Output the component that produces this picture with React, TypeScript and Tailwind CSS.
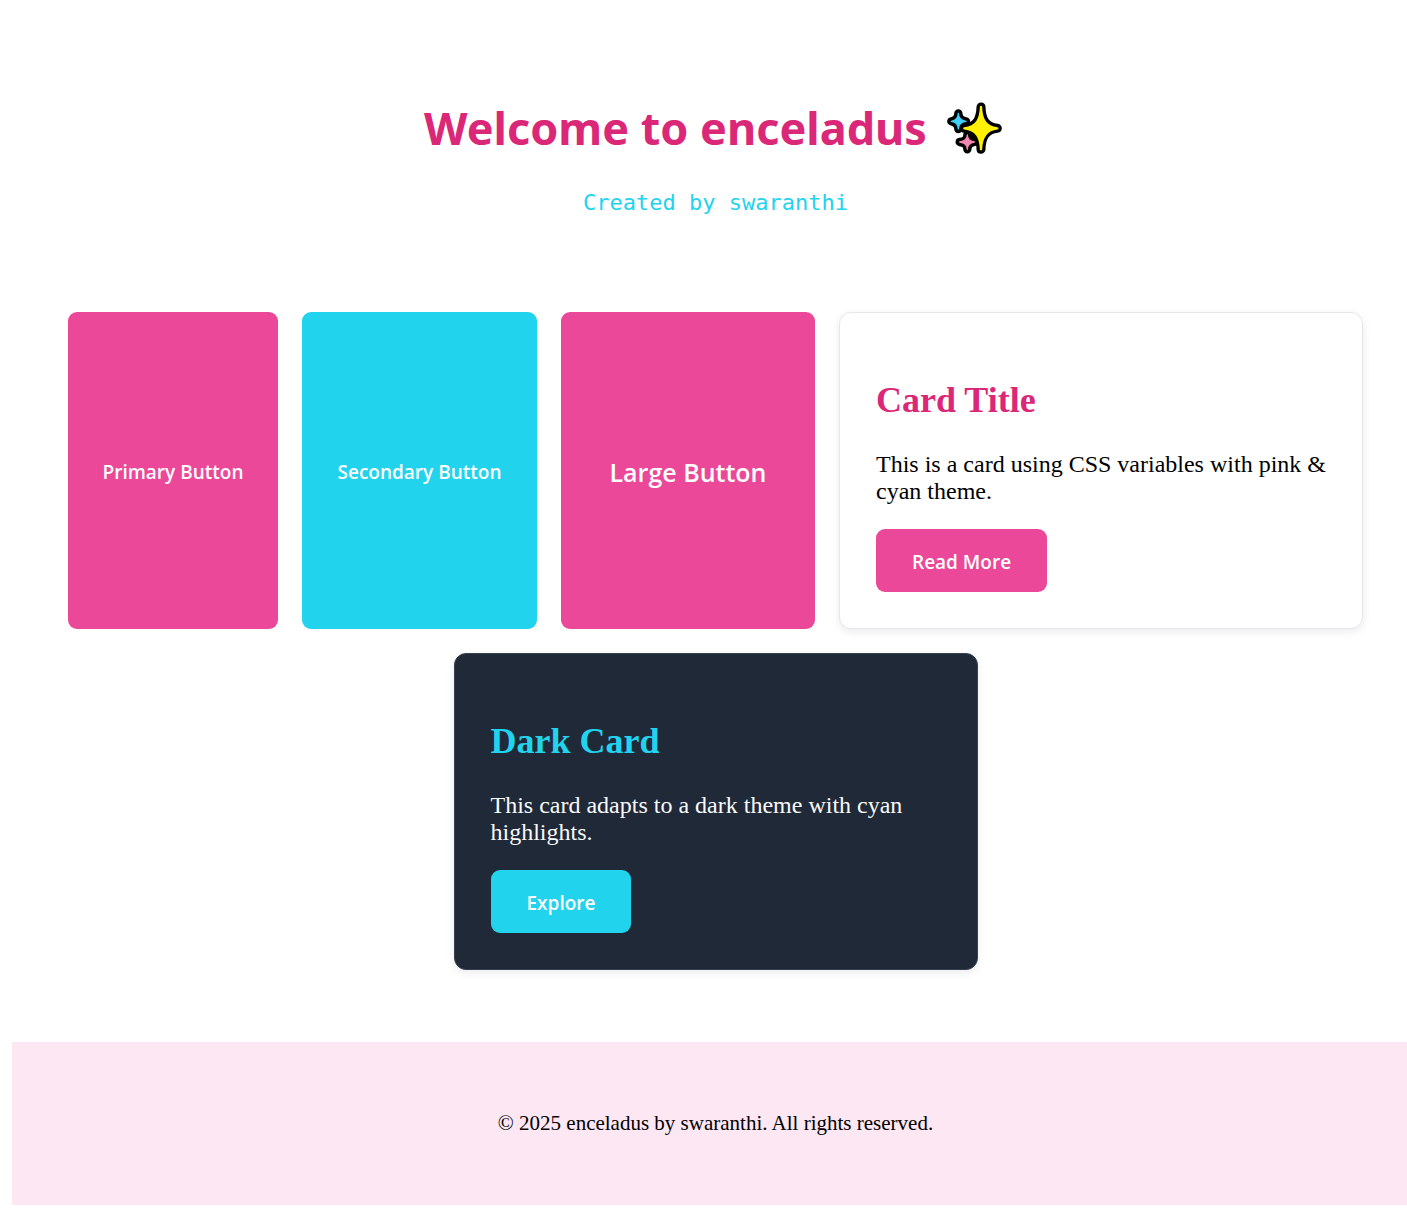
import type { ReactNode } from "react";

const BLUE_STAR = "M58 54 C58 68 66 76 81 78 C66 80 58 88 58 101 C58 88 50 80 37 78 C50 76 58 68 58 54Z";
const PINK_STAR = "M85 119 C85 132 92 138 106 140 C92 142 85 149 85 162 C85 149 78 142 62 140 C78 138 85 132 85 119Z";
const YELLOW_STAR =
  "M126 35 C127 70 138 95 175 99 C138 103 127 128 126 162 C125 128 114 103 76 99 C114 95 125 70 126 35Z";

function Sparkles() {
  return (
    <svg viewBox="24 20 165 156" className="mr-[5px] h-[52px] w-[55px] shrink-0" role="img" aria-label="sparkles">
      <g strokeLinejoin="round">
        <g fill="#000" stroke="#000">
          <path strokeWidth="25" d={BLUE_STAR} />
          <path strokeWidth="25" d={PINK_STAR} />
          <path strokeWidth="27" d={YELLOW_STAR} />
          <path strokeWidth="4" d="M80 105 L115 118 L118 150 L95 128Z" />
        </g>
        <path fill="#3fd0fc" stroke="#3fd0fc" strokeWidth="4" d={BLUE_STAR} />
        <path fill="#f587b3" stroke="#f587b3" strokeWidth="4" d={PINK_STAR} />
        <path fill="#fff100" stroke="#fff100" strokeWidth="7" d={YELLOW_STAR} />
      </g>
    </svg>
  );
}

function Card({ title, children, action, dark = false }: {
  title: string;
  children: ReactNode;
  action: string;
  dark?: boolean;
}) {
  return (
    <article
      className={`w-full max-w-[524px] rounded-xl border p-9 shadow-[0_3px_9px_rgba(0,0,0,0.08)] ${
        dark ? "border-[#374151] bg-[#1f2937] text-[#f9fafb]" : "border-[#e5e7eb] bg-white text-black"
      }`}
    >
      <h2 className={`my-[30px] text-4xl leading-[42px] font-bold ${dark ? "text-[#22d3ee]" : "text-[#db2777]"}`}>
        {title}
      </h2>
      <p className="mb-6 text-2xl leading-[27px]">{children}</p>
      <button
        type="button"
        className={`h-[63px] rounded-[9px] px-9 pt-1 font-['Open_Sans',sans-serif] text-[19px] font-semibold text-white ${
          dark ? "bg-[#22d3ee]" : "bg-[#ec4899]"
        }`}
      >
        {action}
      </button>
    </article>
  );
}

export default function App() {
  return (
    <div className="overflow-x-hidden bg-white py-3 font-['Liberation_Serif',serif] text-black">
      <div className="-mr-3 ml-3">
        <header className="flex flex-col items-center pt-[84px]">
          <h1 className="flex items-center gap-5 font-['Noto_Sans',sans-serif] text-[45px] leading-[64px] font-bold text-[#db2777]">
            Welcome to enceladus <Sparkles />
          </h1>
          <p className="mt-7 font-['DejaVu_Sans_Mono',monospace] text-[22px] leading-[30px] text-[#22d3ee]">
            Created by swaranthi
          </p>
        </header>

        <main className="mt-[94px] flex flex-wrap justify-center gap-6 px-12">
          <button type="button" className="w-[210px] rounded-[9px] bg-[#ec4899] pt-1 font-['Open_Sans',sans-serif] text-[19px] font-semibold text-white">
            Primary Button
          </button>
          <button type="button" className="w-[235px] rounded-[9px] bg-[#22d3ee] pt-1 font-['Open_Sans',sans-serif] text-[19px] font-semibold text-white">
            Secondary Button
          </button>
          <button type="button" className="w-[254px] rounded-[9px] bg-[#ec4899] pt-1 font-['Open_Sans',sans-serif] text-[25px] font-semibold text-white">
            Large Button
          </button>
          <Card title="Card Title" action="Read More">
            This is a card using CSS variables with pink &amp; cyan theme.
          </Card>
          <Card title="Dark Card" action="Explore" dark>
            This card adapts to a dark theme with cyan highlights.
          </Card>
        </main>

        <footer className="mt-[72px] bg-[#fce7f3] py-[69px] text-center text-[21px] leading-[25px]">
          <p>© 2025 enceladus by swaranthi. All rights reserved.</p>
        </footer>
      </div>
    </div>
  );
}
